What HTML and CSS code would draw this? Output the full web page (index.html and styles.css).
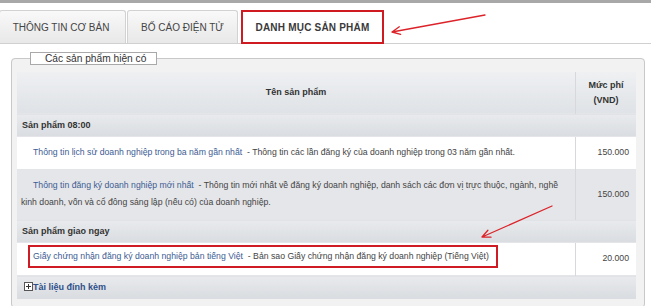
FILE: index.html
```html
<!DOCTYPE html>
<html lang="vi">
<head>
    <meta charset="UTF-8">
    <meta name="viewport" content="width=device-width, initial-scale=1.0">
    <title>Danh mục sản phẩm</title>
    <link rel="stylesheet" href="styles.css">
</head>
<body>
<div class="topbar"></div>

<div class="tabs">
    <div class="tab tab-first">THÔNG TIN CƠ BẢN</div>
    <div class="tab tab-second">BỐ CÁO ĐIỆN TỬ</div>
    <div class="tab active">DANH MỤC SẢN PHẨM</div>
</div>

<div class="panel">
    <fieldset class="products">
        <legend>Các sản phẩm hiện có</legend>
        <table class="product-table">
            <thead>
            <tr>
                <th class="col-name">Tên sản phẩm</th>
                <th class="col-fee">Mức phí<br>(VND)</th>
            </tr>
            </thead>
            <tbody>
            <tr class="group">
                <td colspan="2">Sản phẩm 08:00</td>
            </tr>
            <tr>
                <td class="name"><a href="#">Thông tin lịch sử doanh nghiệp trong ba năm gần nhất</a>&nbsp; - Thông tin các lần đăng ký của doanh nghiệp trong 03 năm gần nhất.</td>
                <td class="fee">150.000</td>
            </tr>
            <tr class="alt">
                <td class="name"><a href="#">Thông tin đăng ký doanh nghiệp mới nhất</a>&nbsp; - Thông tin mới nhất về đăng ký doanh nghiệp, danh sách các đơn vị trực thuộc, ngành, nghề<br>kinh doanh, vốn và cổ đông sáng lập (nếu có) của doanh nghiệp.</td>
                <td class="fee">150.000</td>
            </tr>
            <tr class="group">
                <td colspan="2">Sản phẩm giao ngay</td>
            </tr>
            <tr>
                <td class="name boxed"><span class="highlight"><a href="#">Giấy chứng nhận đăng ký doanh nghiệp bản tiếng Việt</a>&nbsp; - Bản sao Giấy chứng nhận đăng ký doanh nghiệp (Tiếng Việt)</span></td>
                <td class="fee">20.000</td>
            </tr>
            <tr class="footer-row">
                <td colspan="2"><span class="plus-box"></span><a href="#">Tài liệu đính kèm</a></td>
            </tr>
            </tbody>
        </table>
    </fieldset>
</div>

<svg class="arrows" width="651" height="306" viewBox="0 0 651 306">
    <g stroke="#dc2329" stroke-width="1.3" fill="none" stroke-linecap="round">
        <path d="M485 15 L392 32 M392 32 L400.7 34.3 M392 32 L399.3 26.8"/>
        <path d="M552 206 L482 237 M482 237 L491 237.2 M482 237 L487.9 230.2"/>
    </g>
</svg>
</body>
</html>
```

FILE: styles.css
```css
body {
    margin: 0;
    font-family: "Liberation Sans", Arial, sans-serif;
    background-color: #fff;
    color: #444;
    position: relative;
    height: 306px;
    overflow: hidden;
}
.topbar {
    height: 3px;
    background-color: #a8a8a8;
}
.tabs {
    display: flex;
    margin-top: 7px;
    height: 33px;
    border-bottom: 1px solid #d0d0d0;
}
.tab {
    box-sizing: border-box;
    height: 33px;
    display: flex;
    align-items: center;
    justify-content: center;
    font-size: 10px;
    color: #444;
    border: 1px solid #d2d2d2;
    border-bottom: none;
    border-radius: 3px 3px 0 0;
    background: linear-gradient(#f9f9f9, #e8e8e8);
}
.tab-first {
    width: 127px;
    margin-left: -1px;
    padding-right: 3px;
}
.tab-second {
    width: 111px;
    margin-left: 1px;
}
.tab.active {
    width: 143px;
    height: 34px;
    margin-left: 3px;
    border: 2px solid #d01a22;
    border-radius: 0;
    background: #fff;
    font-weight: bold;
    color: #3a3a3a;
    letter-spacing: 0.2px;
}
.panel {
    padding: 8px 6px 0 11px;
}
.products {
    margin: 0;
    padding: 0 5px 8px;
    border: 1px solid #c8c8c8;
    border-radius: 4px;
    background-color: #f2f2f2;
    min-width: 0;
}
.products legend {
    box-sizing: border-box;
    width: 127px;
    height: 13px;
    margin-left: 13px;
    padding: 0 0 0 14px;
    border: 1px solid #a9a9a9;
    background-color: #fff;
    font-size: 10.2px;
    line-height: 11px;
    color: #333;
}
.product-table {
    width: 619px;
    margin-top: 7px;
    border-collapse: collapse;
    font-size: 8.7px;
}
.product-table th {
    height: 40px;
    padding: 0;
    font-size: 9px;
    font-weight: bold;
    color: #333;
    line-height: 15px;
    background: linear-gradient(#eef0f2, #dfe2e6);
}
.product-table th.col-name {
    width: 558px;
    border-right: 1px solid #d6d8db;
}
.product-table th.col-fee {
    padding-top: 1px;
}
.product-table td {
    padding: 7px 4px 8px;
    line-height: 17px;
    vertical-align: middle;
    border-top: 1px solid #e3e5e8;
    background-color: #fff;
}
.product-table td.fee {
    text-align: right;
    padding-right: 7px;
    border-left: 1px solid #d6d8db;
}
.product-table td.name {
    text-indent: 12px;
}
.product-table a {
    color: #3d5c93;
    text-decoration: none;
}
.product-table tr.alt td {
    background-color: #e4e6e9;
}
.product-table tr.group td {
    padding: 3px 5px 2px;
    font-size: 9px;
    font-weight: bold;
    color: #333;
    background: linear-gradient(#e8eaed, #d9dce0);
}
.product-table td.boxed {
    text-indent: 0;
    padding-top: 1px;
    padding-bottom: 7px;
}
.highlight {
    display: block;
    width: fit-content;
    margin-left: 7px;
    padding: 1px 7px 1px 3px;
    border: 2px solid #cf1b23;
}
.product-table tr.footer-row td {
    padding: 3px 6px 3px 7px;
    background: linear-gradient(#e8eaed, #d8dbdf);
}
.footer-row a {
    font-size: 9px;
    font-weight: bold;
    color: #2f4f8a;
}
.plus-box {
    display: inline-block;
    position: relative;
    box-sizing: border-box;
    width: 9px;
    height: 9px;
    margin-right: 0;
    vertical-align: -1px;
    border: 1px solid #555;
    background-color: #fff;
}
.plus-box::before,
.plus-box::after {
    content: "";
    position: absolute;
    background-color: #333;
}
.plus-box::before {
    left: 1px;
    top: 3px;
    width: 5px;
    height: 1px;
}
.plus-box::after {
    left: 3px;
    top: 1px;
    width: 1px;
    height: 5px;
}
.arrows {
    position: absolute;
    top: 0;
    left: 0;
    pointer-events: none;
}
```
